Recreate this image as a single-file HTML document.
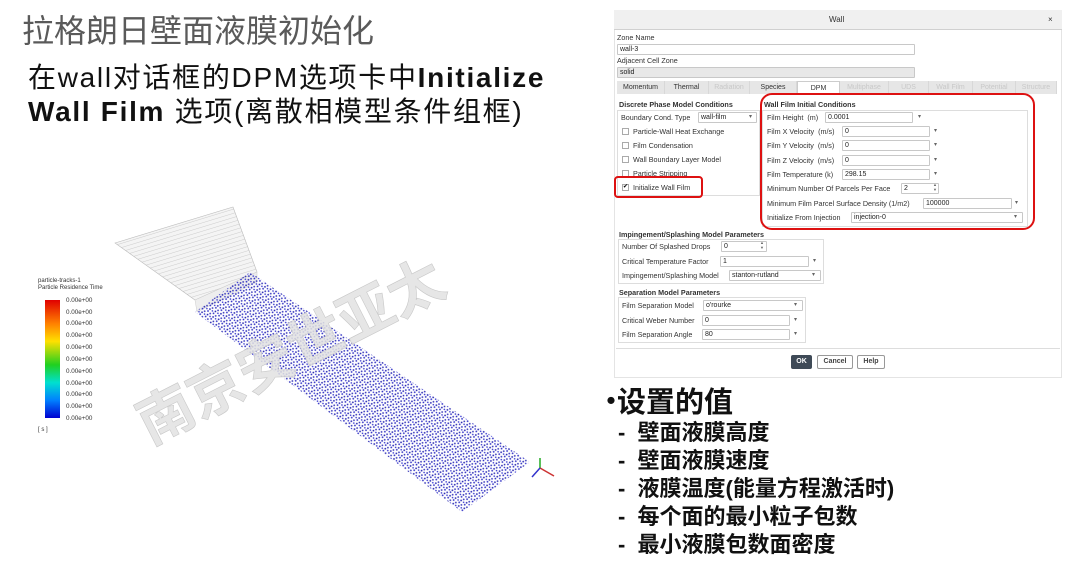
<!DOCTYPE html>
<html><head><meta charset="utf-8"><style>
*{margin:0;padding:0;box-sizing:border-box}
body{width:1080px;height:569px;background:#fff;position:relative;overflow:hidden;font-family:"Liberation Sans","Noto Sans CJK SC",sans-serif}
.a{position:absolute;white-space:nowrap}
.t{font-size:7.2px;color:#333;line-height:9px}
.b{font-weight:bold}
.in{position:absolute;border:1px solid #c8c8c8;background:#fff;height:11px;font-size:7px;line-height:9px;padding-left:2px;color:#222;border-radius:1px}
.ar{position:absolute;font-size:6px;color:#666}
.cb{position:absolute;width:7px;height:7px;border:1px solid #aaa;background:#fff}
.grp{position:absolute;border:1px solid #ddd}
.tab{position:absolute;top:81px;height:13px;font-size:7px;line-height:13px;text-align:center;color:#333;border-right:1px solid #d8d8d8}
.tab.d{color:#c8c8c8}
.btn{position:absolute;top:355px;height:14px;font-size:7px;line-height:12px;text-align:center;border:1px solid #999;border-radius:2px;font-weight:bold;color:#444;background:#fff}
</style></head><body>
<div class="a" style="left:22px;top:9px;font-size:32px;color:#5a5a5a;font-family:'Noto Sans CJK SC',sans-serif;line-height:40px">拉格朗日壁面液膜初始化</div>
<div class="a" style="left:28px;top:61px;font-size:28px;color:#111;line-height:34px;letter-spacing:1.7px">在wall对话框的DPM选项卡中<b>Initialize</b></div>
<div class="a" style="left:28px;top:95px;font-size:28px;color:#111;line-height:34px;letter-spacing:1.7px"><b>Wall Film</b> 选项(离散相模型条件组框)</div>

<svg class="a" style="left:0;top:190px" width="600" height="330" viewBox="0 190 600 330">
<defs>
<pattern id="dots" width="6" height="6" patternUnits="userSpaceOnUse" patternTransform="rotate(23)">
<circle cx="1" cy="1" r="0.9" fill="#2b2bc4"/><circle cx="4" cy="2.5" r="0.9" fill="#3333b8"/><circle cx="2" cy="4.5" r="0.9" fill="#2020b0"/><circle cx="5" cy="5.2" r="0.8" fill="#3a3ad0"/>
</pattern>
<pattern id="mesh" width="4" height="4" patternUnits="userSpaceOnUse" patternTransform="rotate(-17)">
<rect width="4" height="4" fill="#f4f4f4"/><line x1="0" y1="0" x2="4" y2="0" stroke="#bbb" stroke-width="0.7"/>
</pattern>
<linearGradient id="cbar" x1="0" y1="0" x2="0" y2="1">
<stop offset="0" stop-color="#e00000"/><stop offset="0.2" stop-color="#ff8000"/><stop offset="0.35" stop-color="#ffe000"/><stop offset="0.55" stop-color="#20d020"/><stop offset="0.7" stop-color="#00e0d0"/><stop offset="0.85" stop-color="#0080ff"/><stop offset="1" stop-color="#0000d0"/>
</linearGradient>
</defs>
<polygon points="115,243 233,207 257,272 195,300" fill="url(#mesh)" stroke="#bbb" stroke-width="0.6"/>
<polygon points="195,300 257,272 257,282 197,312" fill="#eee" stroke="#ccc" stroke-width="0.5"/>
<polygon points="195,312 250,272 530,462 462,512" fill="url(#dots)"/>
<rect x="45" y="300" width="15" height="118" fill="url(#cbar)"/>
<text x="38" y="282" font-size="6" fill="#333">particle-tracks-1</text>
<text x="38" y="289" font-size="6" fill="#333">Particle Residence Time</text>
<g font-size="6.3" fill="#333">
<text x="66" y="302">0.00e+00</text><text x="66" y="314">0.00e+00</text><text x="66" y="325">0.00e+00</text><text x="66" y="337">0.00e+00</text><text x="66" y="349">0.00e+00</text><text x="66" y="361">0.00e+00</text><text x="66" y="373">0.00e+00</text><text x="66" y="385">0.00e+00</text><text x="66" y="396">0.00e+00</text><text x="66" y="408">0.00e+00</text><text x="66" y="420">0.00e+00</text>
</g>
<text x="38" y="431" font-size="6" fill="#333">[ s ]</text>
<text x="0" y="0" font-size="56" font-weight="bold" fill="#e2e2e2" fill-opacity="0.85" stroke="#c8c8c8" stroke-width="0.6" font-family="Noto Sans CJK SC" transform="translate(150,445) rotate(-27)">南京安世亚太</text>
<g stroke-width="1.5"><line x1="540" y1="468" x2="540" y2="458" stroke="#2a2"/><line x1="540" y1="468" x2="554" y2="476" stroke="#c33"/><line x1="540" y1="468" x2="532" y2="477" stroke="#33c"/></g>
</svg>

<!-- dialog -->
<div class="a" style="left:614px;top:10px;width:448px;height:368px;background:#fff;border:1px solid #e4e4e4"></div>
<div class="a" style="left:614px;top:10px;width:448px;height:20px;background:#f0f0f0;border-bottom:1px solid #d0d0d0"></div>
<div class="a t" style="left:829px;top:15px;font-size:8px">Wall</div>
<div class="a t" style="left:1048px;top:15px;font-size:8px">×</div>
<div class="a t" style="left:617px;top:33px">Zone Name</div>
<div class="in" style="left:617px;top:44px;width:298px">wall-3</div>
<div class="a t" style="left:617px;top:56px">Adjacent Cell Zone</div>
<div class="in" style="left:617px;top:67px;width:298px;background:#e8e8e8">solid</div>
<div class="a" style="left:617px;top:81px;width:440px;height:13px;background:#e6e6e6"></div>
<div class="tab" style="left:617px;width:48px">Momentum</div>
<div class="tab" style="left:665px;width:44px">Thermal</div>
<div class="tab d" style="left:709px;width:41px">Radiation</div>
<div class="tab" style="left:750px;width:47px">Species</div>
<div class="tab" style="left:797px;width:43px;background:#fff;border:1px solid #ccc;border-bottom:none">DPM</div>
<div class="tab d" style="left:840px;width:49px">Multiphase</div>
<div class="tab d" style="left:889px;width:40px">UDS</div>
<div class="tab d" style="left:929px;width:44px">Wall Film</div>
<div class="tab d" style="left:973px;width:43px">Potential</div>
<div class="tab d" style="left:1016px;width:41px">Structure</div>

<div class="a t b" style="left:619px;top:100px">Discrete Phase Model Conditions</div>
<div class="grp" style="left:617px;top:110px;width:143px;height:86px"></div>
<div class="a t" style="left:621px;top:113px">Boundary Cond. Type</div>
<div class="in" style="left:698px;top:112px;width:59px">wall-film</div><div class="ar" style="left:749px;top:113px">▾</div>
<div class="cb" style="left:622px;top:128px"></div><div class="a t" style="left:633px;top:127px">Particle-Wall Heat Exchange</div>
<div class="cb" style="left:622px;top:142px"></div><div class="a t" style="left:633px;top:141px">Film Condensation</div>
<div class="cb" style="left:622px;top:156px"></div><div class="a t" style="left:633px;top:155px">Wall Boundary Layer Model</div>
<div class="cb" style="left:622px;top:170px"></div><div class="a t" style="left:633px;top:169px">Particle Stripping</div>
<div class="cb" style="left:622px;top:184px;font-size:6px;line-height:5px;text-align:center">✔</div><div class="a t" style="left:633px;top:183px">Initialize Wall Film</div>
<div class="a" style="left:614px;top:176px;width:89px;height:22px;border:2px solid #d11;border-radius:4px"></div>

<div class="a t b" style="left:764px;top:100px">Wall Film Initial Conditions</div>
<div class="grp" style="left:762px;top:110px;width:266px;height:117px"></div>
<div class="a t" style="left:767px;top:113px">Film Height &nbsp;(m)</div><div class="in" style="left:825px;top:112px;width:88px">0.0001</div><div class="ar" style="left:918px;top:113px">▾</div>
<div class="a t" style="left:767px;top:127px">Film X Velocity &nbsp;(m/s)</div><div class="in" style="left:842px;top:126px;width:88px">0</div><div class="ar" style="left:934px;top:127px">▾</div>
<div class="a t" style="left:767px;top:141px">Film Y Velocity &nbsp;(m/s)</div><div class="in" style="left:842px;top:140px;width:88px">0</div><div class="ar" style="left:934px;top:141px">▾</div>
<div class="a t" style="left:767px;top:156px">Film Z Velocity &nbsp;(m/s)</div><div class="in" style="left:842px;top:155px;width:88px">0</div><div class="ar" style="left:934px;top:156px">▾</div>
<div class="a t" style="left:767px;top:170px">Film Temperature (k)</div><div class="in" style="left:842px;top:169px;width:88px">298.15</div><div class="ar" style="left:934px;top:170px">▾</div>
<div class="a t" style="left:767px;top:184px">Minimum Number Of Parcels Per Face</div><div class="in" style="left:901px;top:183px;width:38px">2</div><div class="ar" style="left:933px;top:182px;font-size:4px;line-height:5px">▲<br>▼</div>
<div class="a t" style="left:767px;top:199px">Minimum Film Parcel Surface Density (1/m2)</div><div class="in" style="left:923px;top:198px;width:89px">100000</div><div class="ar" style="left:1015px;top:199px">▾</div>
<div class="a t" style="left:767px;top:213px">Initialize From Injection</div><div class="in" style="left:851px;top:212px;width:172px">injection-0</div><div class="ar" style="left:1014px;top:213px">▾</div>
<div class="a" style="left:760px;top:93px;width:275px;height:137px;border:2px solid #d11;border-radius:12px"></div>

<div class="a t b" style="left:619px;top:230px">Impingement/Splashing Model Parameters</div>
<div class="grp" style="left:618px;top:239px;width:206px;height:45px"></div>
<div class="a t" style="left:622px;top:242px">Number Of Splashed Drops</div><div class="in" style="left:721px;top:241px;width:46px">0</div><div class="ar" style="left:760px;top:240px;font-size:4px;line-height:5px">▲<br>▼</div>
<div class="a t" style="left:622px;top:257px">Critical Temperature Factor</div><div class="in" style="left:720px;top:256px;width:89px">1</div><div class="ar" style="left:813px;top:257px">▾</div>
<div class="a t" style="left:622px;top:271px">Impingement/Splashing Model</div><div class="in" style="left:729px;top:270px;width:92px">stanton-rutland</div><div class="ar" style="left:812px;top:271px">▾</div>

<div class="a t b" style="left:619px;top:288px">Separation Model Parameters</div>
<div class="grp" style="left:618px;top:297px;width:188px;height:46px"></div>
<div class="a t" style="left:622px;top:301px">Film Separation Model</div><div class="in" style="left:703px;top:300px;width:100px">o'rourke</div><div class="ar" style="left:794px;top:301px">▾</div>
<div class="a t" style="left:622px;top:316px">Critical Weber Number</div><div class="in" style="left:702px;top:315px;width:88px">0</div><div class="ar" style="left:794px;top:316px">▾</div>
<div class="a t" style="left:622px;top:330px">Film Separation Angle</div><div class="in" style="left:702px;top:329px;width:88px">80</div><div class="ar" style="left:794px;top:330px">▾</div>
<div class="a" style="left:616px;top:348px;width:444px;height:1px;background:#ddd"></div>
<div class="btn" style="left:791px;width:21px;background:#3f4a57;color:#fff;border-color:#3f4a57">OK</div>
<div class="btn" style="left:817px;width:36px">Cancel</div>
<div class="btn" style="left:857px;width:28px">Help</div>

<div class="a" style="left:597px;top:380px;font-size:28px;font-weight:bold;color:#111;line-height:40px;font-family:'Noto Sans CJK SC',sans-serif">•</div>
<div class="a" style="left:617px;top:380px;font-size:29px;font-weight:bold;color:#111;line-height:40px;font-family:'Noto Sans CJK SC',sans-serif">设置的值</div>
<div class="a" style="left:618px;top:419px;font-size:22px;font-weight:bold;color:#111;line-height:28px;font-family:'Liberation Sans','Noto Sans CJK SC',sans-serif">
-&nbsp;&nbsp;壁面液膜高度<br>-&nbsp;&nbsp;壁面液膜速度<br>-&nbsp;&nbsp;液膜温度(能量方程激活时)<br>-&nbsp;&nbsp;每个面的最小粒子包数<br>-&nbsp;&nbsp;最小液膜包数面密度</div>
</body></html>
